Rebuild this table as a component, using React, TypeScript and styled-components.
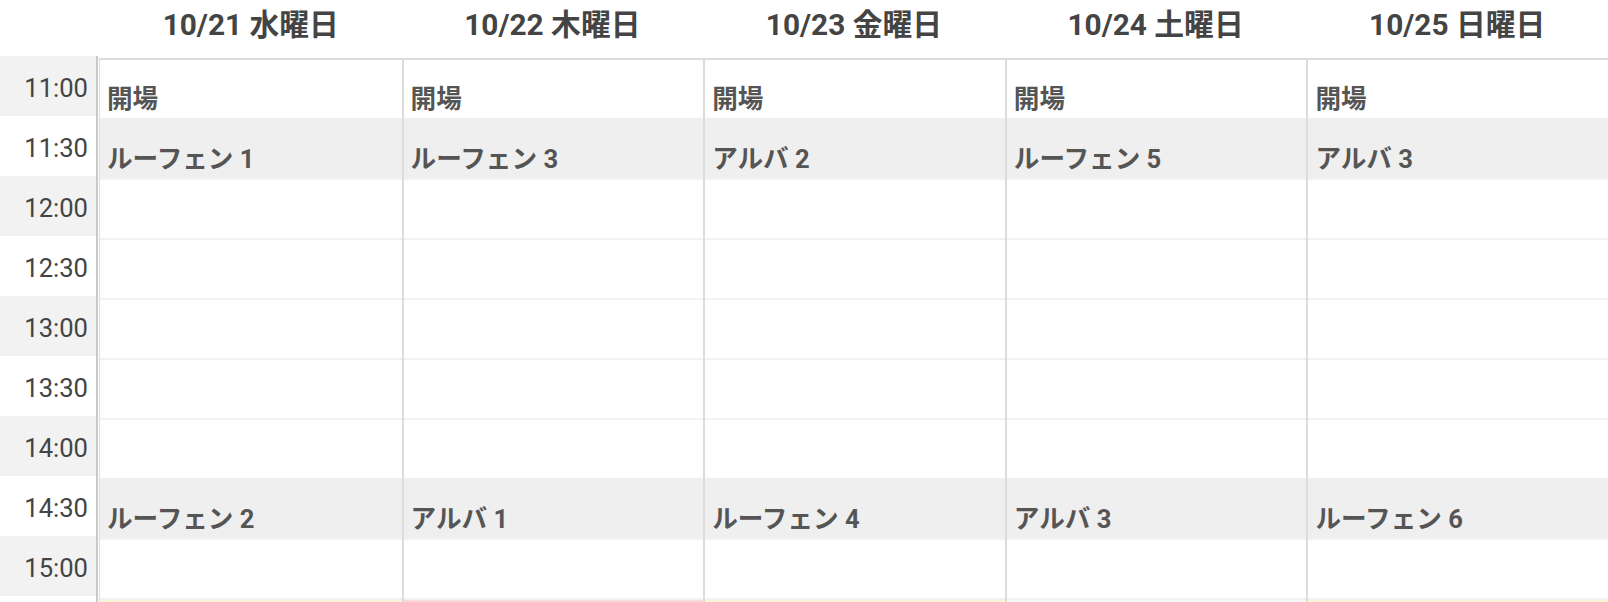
import { FC } from "react"
import styled, { createGlobalStyle } from "styled-components"

const GlobalStyle = createGlobalStyle`
  html, body {
    margin: 0;
    padding: 0;
    background: #fff;
    overflow: hidden;
  }
  body {
    font-family: Roboto, "Noto Sans CJK JP", sans-serif;
    color: #444;
  }
`

const Page = styled.div`
  height: 100vh;
  overflow: hidden;
`

const HeaderRow = styled.div`
  display: grid;
  grid-template-columns: 100px repeat(5, 1fr);
  height: 56px;
`

const DayTitle = styled.div`
  display: flex;
  align-items: center;
  justify-content: center;
  font-size: 29.8px;
  font-weight: 700;
  color: #444;
  padding-bottom: 14px;
  box-sizing: border-box;
`

const Body = styled.div`
  display: grid;
  grid-template-columns: 98px 1fr;
`

const TimeColumn = styled.div`
  border-right: 2px solid #c9c9c9;
`

const TimeCell = styled.div<{ $shade: boolean }>`
  height: 60px;
  box-sizing: border-box;
  display: flex;
  align-items: center;
  justify-content: flex-end;
  padding: 3px 8px 0 0;
  font-size: 25.6px;
  color: #444;
  background: ${(p) => (p.$shade ? "#f2f2f2" : "#fff")};
`

const DayArea = styled.div`
  display: grid;
  grid-template-columns: repeat(5, 1fr);
  margin-left: 1px;
  margin-top: 2px;
  border-left: 1px solid #ddd;
`

const DayColumn = styled.div`
  min-width: 0;
  & + & {
    border-left: 2px solid #dcdcdc;
  }
`

const Slot = styled.div<{ $shade: boolean; $first: boolean; $tint?: string }>`
  height: 60px;
  box-sizing: border-box;
  padding: 24px 0 0 7px;
  border-top: 2px solid
    ${(p) => (p.$first ? "#dcdcdc" : p.$shade ? "#efefef" : "#f2f2f2")};
  background: ${(p) => p.$tint || (p.$shade ? "#efefef" : "#fff")};
  font-size: 25.6px;
  line-height: 30px;
  font-weight: 700;
  color: #555;
  white-space: nowrap;
`

const times = ["11:00", "11:30", "12:00", "12:30", "13:00", "13:30", "14:00", "14:30", "15:00"]
const shadedRows = [1, 7]
// one more row below 15:00, only its top edge shows in the window
const rowCount = times.length + 1

type Day = { label: string; events: Record<number, string>; tail: string }

const days: Day[] = [
  { label: "10/21 水曜日", events: { 0: "開場", 1: "ルーフェン 1", 7: "ルーフェン 2" }, tail: "#fdf3d6" },
  { label: "10/22 木曜日", events: { 0: "開場", 1: "ルーフェン 3", 7: "アルバ 1" }, tail: "#f9dada" },
  { label: "10/23 金曜日", events: { 0: "開場", 1: "アルバ 2", 7: "ルーフェン 4" }, tail: "#fdf3d6" },
  { label: "10/24 土曜日", events: { 0: "開場", 1: "ルーフェン 5", 7: "アルバ 3" }, tail: "#f6f6f6" },
  { label: "10/25 日曜日", events: { 0: "開場", 1: "アルバ 3", 7: "ルーフェン 6" }, tail: "#fdf3d6" },
]

const App: FC = () => {
  return (
    <Page>
      <GlobalStyle />
      <HeaderRow>
        <div />
        {days.map((d) => (
          <DayTitle key={d.label}>{d.label}</DayTitle>
        ))}
      </HeaderRow>
      <Body>
        <TimeColumn>
          {times.map((t, i) => (
            <TimeCell key={t} $shade={i % 2 === 0}>
              {t}
            </TimeCell>
          ))}
          <TimeCell $shade={false} />
        </TimeColumn>
        <DayArea>
          {days.map((d) => (
            <DayColumn key={d.label}>
              {Array.from({ length: rowCount }, (_, i) => (
                <Slot
                  key={i}
                  $first={i === 0}
                  $shade={shadedRows.includes(i)}
                  $tint={i === rowCount - 1 ? d.tail : undefined}
                >
                  {d.events[i]}
                </Slot>
              ))}
            </DayColumn>
          ))}
        </DayArea>
      </Body>
    </Page>
  )
}

export default App
